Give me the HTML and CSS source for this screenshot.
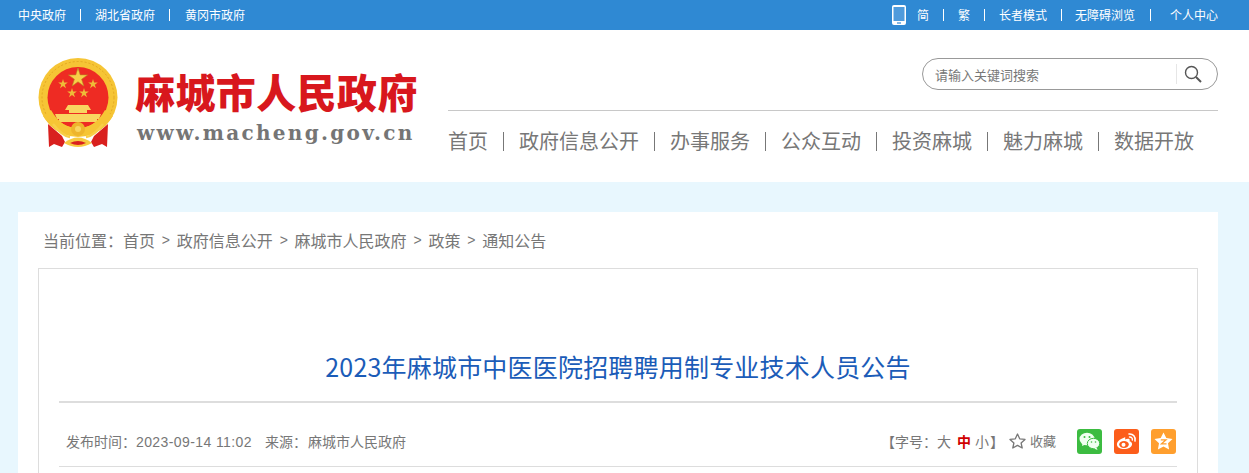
FILE: index.html
```html
<!DOCTYPE html>
<html lang="zh-CN">
<head>
<meta charset="utf-8">
<title>2023年麻城市中医医院招聘聘用制专业技术人员公告</title>
<link rel="stylesheet" href="styles.css">
</head>
<body>
<div class="topbar">
  <div class="top-left">
    <a>中央政府</a><i class="tsep"></i><a>湖北省政府</a><i class="tsep"></i><a class="gov-last">黄冈市政府</a>
  </div>
  <div class="top-right">
    <svg class="phone" width="14" height="20" viewBox="0 0 14 20"><rect width="14" height="20" rx="2" fill="#fff"/><rect x="1.500" y="2" width="11" height="14" fill="#4f9bdc"/><rect x="5" y="17.300" width="4" height="1.400" fill="#4f9bdc"/></svg>
    <a>简</a><i class="tsep"></i><a>繁</a><i class="tsep"></i><a>长者模式</a><i class="tsep tight-r"></i><a>无障碍浏览</a><i class="tsep tight-l"></i><a class="last">个人中心</a>
  </div>
</div>
<header class="header">
  <div class="logo">
    <svg class="emblem" width="82" height="90" viewBox="0 0 82 90">
      <circle cx="41" cy="39.500" r="39.500" fill="#f6c535"/>
      <circle cx="41" cy="39.500" r="36" fill="none" stroke="#e3a722" stroke-width="1" stroke-dasharray="2 2"/>
      <circle cx="41" cy="39.500" r="30.500" fill="#ee2b23"/>
      <polygon fill="#f8cf48" stroke="#b98a22" stroke-width=".6" points="41,10 43.200,16.900 50.500,16.900 44.600,21.200 46.800,28 41,23.800 35.200,28 37.400,21.200 31.500,16.900 38.800,16.900"/>
      <polygon fill="#eebc38" points="26,21 27.100,24.500 30.800,24.500 27.800,26.700 29,30.200 26,28 23,30.200 24.200,26.700 21.200,24.500 24.900,24.500"/>
      <polygon fill="#eebc38" points="56,21 57.100,24.500 60.800,24.500 57.800,26.700 59,30.200 56,28 53,30.200 54.200,26.700 51.200,24.500 54.900,24.500"/>
      <polygon fill="#eebc38" points="35,30 36.100,33.500 39.800,33.500 36.800,35.700 38,39.200 35,37 32,39.200 33.200,35.700 30.200,33.500 33.900,33.500"/>
      <polygon fill="#eebc38" points="47,30 48.100,33.500 51.800,33.500 48.800,35.700 50,39.200 47,37 44,39.200 45.200,35.700 42.200,33.500 45.900,33.500"/>
      <path d="M31 47 H51 L54 52 H50 V55 H32 V52 H28Z" fill="#f9d560"/>
      <path d="M18 56 H64 L62 61 H60 V64 H22 V61 H20Z" fill="#f9d560"/>
      <path d="M6 58 Q20 78 41 78 Q62 78 76 58 L68 52 Q58 70 41 70 Q24 70 14 52Z" fill="#f6c535"/>
      <path d="M11 66 L25 78 L28 84 L25 89 L17 86 L12 89Z" fill="#d9201e"/>
      <path d="M71 66 L57 78 L54 84 L57 89 L65 86 L70 89Z" fill="#d9201e"/>
      <path d="M16 66 Q25 78 33 79" fill="none" stroke="#f8cf48" stroke-width="2.500"/>
      <path d="M66 66 Q57 78 49 79" fill="none" stroke="#f8cf48" stroke-width="2.500"/>
      <circle cx="41" cy="71" r="7" fill="#eeb52c"/>
      <circle cx="41" cy="71" r="3" fill="#f9d560"/>
      <path d="M27 85 Q41 74 55 85 Q41 93 27 85Z" fill="#f8ca40"/>
      <path d="M33 85 Q41 81 49 85 Q41 89 33 85Z" fill="#d9201e"/>
    </svg>
    <div class="logo-text">
      <div class="logo-cn">麻城市人民政府</div>
      <div class="logo-en">www.macheng.gov.cn</div>
    </div>
  </div>
  <div class="head-right">
    <div class="search-row">
      <div class="search">
        <span class="search-ph">请输入关键词搜索</span>
        <span class="search-btn">
          <svg width="18" height="18" viewBox="0 0 18 18" fill="none" stroke="#555"><circle cx="7.500" cy="7.500" r="6" stroke-width="1.400"/><path d="M12 12 L17 17" stroke-width="2"/></svg>
        </span>
      </div>
    </div>
    <nav class="nav">
      <a>首页</a><i></i><a>政府信息公开</a><i></i><a>办事服务</a><i></i><a>公众互动</a><i></i><a>投资麻城</a><i></i><a>魅力麻城</a><i></i><a>数据开放</a>
    </nav>
  </div>
</header>
<main class="band">
  <div class="card">
    <div class="crumbs">
      <span>当前位置：</span><a>首页</a><b>&gt;</b><a>政府信息公开</a><b>&gt;</b><a>麻城市人民政府</a><b>&gt;</b><a>政策</a><b>&gt;</b><a>通知公告</a>
    </div>
    <article class="box">
      <h1 class="title">2023年麻城市中医医院招聘聘用制专业技术人员公告</h1>
      <div class="meta">
        <div class="meta-left">
          <span class="pub">发布时间：<span class="num">2023-09-14 11:02</span></span>
          <span>来源：</span><span class="src">麻城市人民政府</span>
        </div>
        <div class="meta-right">
          <span class="fontsize">【字号：<a>大</a><a class="on">中</a><a>小</a>】</span>
          <svg class="star" width="17" height="16" viewBox="0 0 17 16"><polygon points="8.500,1 10.700,5.800 16,6.400 12.100,10 13.200,15 8.500,12.400 3.800,15 4.900,10 1,6.400 6.300,5.800" fill="none" stroke="#777" stroke-width="1.300" stroke-linejoin="round"/></svg>
          <span class="fav">收藏</span>
          <span class="share wx">
            <svg width="21" height="19" viewBox="0 0 21 19"><ellipse cx="8" cy="7" rx="7.500" ry="6.300" fill="#f0fff0"/><path d="M3.500 11 L3 14 L6.500 12.500Z" fill="#f0fff0"/><ellipse cx="14.500" cy="11.500" rx="6.200" ry="5.200" fill="#f0fff0" stroke="#3cbc41"/><path d="M17.500 15.500 L18.500 18 L15 16.500Z" fill="#f0fff0"/><circle cx="5.500" cy="5" r="1" fill="#3cbc41"/><circle cx="10.500" cy="5" r="1" fill="#3cbc41"/><circle cx="12.500" cy="10" r=".8" fill="#3cbc41"/><circle cx="16.500" cy="10" r=".8" fill="#3cbc41"/></svg>
          </span>
          <span class="share wb">
            <svg width="21" height="18" viewBox="0 0 21 18"><path d="M8.500 5.500 C3.500 7 0.500 10 1 13 C1.500 16 5.500 17.500 9.500 17 C14 16.500 16.500 14 16 11.500 C15.700 10 14 9.500 13.500 9.300 C14 8 13.800 7 12.500 6.700 C11.500 6.500 10 7 9 7.500 C9.500 6 9.500 5 8.500 5.500Z" fill="#fff"/><ellipse cx="8" cy="12.500" rx="4.800" ry="3.400" fill="#fc5d1b"/><circle cx="7.500" cy="12.700" r="2" fill="#fff"/><path d="M13 2 C17 1.500 20 5 19 9" fill="none" stroke="#fff" stroke-width="1.600" stroke-linecap="round"/><path d="M13.500 5 C15.500 4.800 16.800 6.500 16.300 8" fill="none" stroke="#fff" stroke-width="1.400" stroke-linecap="round"/></svg>
          </span>
          <span class="share qz">
            <svg width="19" height="18" viewBox="0 0 19 18"><polygon points="9.500,0.500 12.300,6 18.500,6.900 14,11.200 15.100,17.500 9.500,14.500 3.900,17.500 5,11.200 0.500,6.900 6.700,6" fill="#fff"/><path d="M6.800 7.800 H12 L7.500 11.800 H12.500" fill="none" stroke="#ff9f2e" stroke-width="1.300"/></svg>
          </span>
        </div>
      </div>
    </article>
  </div>
</main>
</body>
</html>
```
FILE: styles.css
```css
* { box-sizing: border-box; }
html, body { margin: 0; padding: 0; height: 100%; overflow: hidden; }
body {
  width: 1249px;
  display: flex;
  flex-direction: column;
  font-family: "Noto Sans CJK SC", "Liberation Sans", sans-serif;
  color: #666;
  background: #e8f7fe;
}
i { font-style: normal; }

.topbar {
  flex: none;
  height: 30px;
  background: #2f89d3;
  color: #fff;
  font-size: 12px;
  line-height: 30px;
  display: flex;
  justify-content: space-between;
  padding: 0 31px 0 18px;
}
.top-left, .top-right { display: flex; align-items: center; }
.tsep { width: 1px; height: 12px; background: #fff; margin: 0 14px; }
.tsep.tight-r { margin-right: 13px; }
.tsep.tight-l { margin-left: 15px; }
.gov-last { margin-left: 1px; }
.phone { margin-right: 11px; }
.last { margin-left: 5px; }

.header {
  flex: none;
  height: 152px;
  background: #fff;
  display: flex;
}
.logo {
  width: 448px;
  padding: 28px 0 0 37px;
  display: flex;
  align-items: flex-start;
}
.emblem { flex: none; }
.logo-text { margin-left: 16px; }
.logo-cn {
  font-size: 40px;
  line-height: 48px;
  margin-top: 9px;
  font-weight: 900;
  color: #d8171d;
  white-space: nowrap;
  letter-spacing: .4px;
}
.logo-en {
  font-family: "DejaVu Serif", serif;
  font-weight: 700;
  font-size: 20px;
  line-height: 26px;
  letter-spacing: 2.3px;
  margin: 5px 0 0 2px;
  color: #757575;
  white-space: nowrap;
}

.head-right { width: 770px; display: flex; flex-direction: column; }
.search-row { display: flex; justify-content: flex-end; padding-top: 28px; height: 81px; border-bottom: 1px solid #c8c8c8; }
.search {
  width: 296px;
  height: 32px;
  border: 1px solid #999;
  border-radius: 16px;
  display: flex;
  align-items: center;
  justify-content: space-between;
  padding: 0 15px 0 12px;
}
.search-ph { font-size: 13px; color: #777; }
.search-btn { display: flex; align-items: center; height: 20px; border-left: 1px solid #e6e6e6; padding-left: 7px; }

.nav {
  display: flex;
  align-items: center;
  margin-top: 16px;
  font-size: 20px;
  line-height: 28px;
  color: #777;
  white-space: nowrap;
}
.nav i { width: 1px; height: 19px; background: #777; margin: 0 15px; }

.band { flex: 1; min-height: 0; padding: 30px 31px 0 18px; }
.card { height: 100%; background: #fff; padding: 0 20px; display: flex; flex-direction: column; }
.crumbs {
  flex: none;
  height: 56px;
  padding: 17px 0 0 5px;
  font-size: 16px;
  line-height: 22px;
  display: flex;
  color: #777;
  white-space: nowrap;
}
.crumbs b { font-weight: 400; font-size: 14px; margin: 0 6.8px; font-family: "Liberation Sans", sans-serif; }

.box {
  flex: 1;
  min-height: 0;
  border: 1px solid #ddd;
  border-bottom: 0;
  padding: 0 20px;
}
.title {
  margin: 0;
  height: 134px;
  padding-top: 79px;
  border-bottom: 2px solid #ddd;
  text-align: center;
  font-size: 25px;
  line-height: 36px;
  font-weight: 400;
  letter-spacing: .2px;
  color: #1b5cb8;
}
.meta {
  height: 64px;
  border-bottom: 1px solid #ddd;
  display: flex;
  justify-content: space-between;
  align-items: center;
  font-size: 14px;
  line-height: 20px;
  padding: 13px 1px 0 7px;
  color: #777;
}
.pub { margin-right: 13px; }
.num { font-family: "Liberation Sans", sans-serif; font-size: 14px; letter-spacing: .4px; }
.src { margin-left: 1px; }
.meta-left, .meta-right { display: flex; align-items: center; white-space: nowrap; }
.fontsize { display: flex; margin-right: 5px; }
.fontsize a { margin-right: 6px; }
.fontsize a.on { margin-right: 4px; color: #d00000; font-weight: 700; }
.fontsize a:last-child { margin-right: 1px; }
.fav { margin: 0 21px 0 4px; font-size: 13px; }
.share {
  width: 25px;
  height: 25px;
  border-radius: 3px;
  display: flex;
  align-items: center;
  justify-content: center;
  margin-left: 12px;
}
.fav + .share { margin-left: 0; }
.wx { background: #3cbc41; }
.wb { background: #fc5d1b; }
.qz { background: #ff9f2e; }
```
